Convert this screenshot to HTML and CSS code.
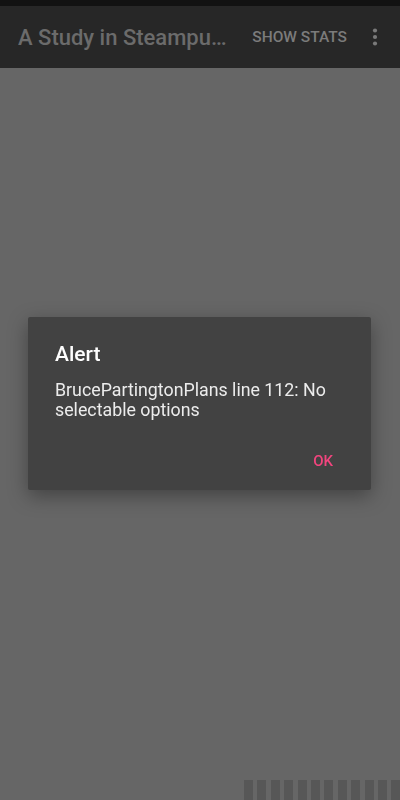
FILE: index.html
```html
<!DOCTYPE html>
<html>

<head>
    <meta charset="utf-8" />
    <title>A Study in Steampunk</title>
    <link rel="stylesheet" href="styles.css">
</head>

<body>
    <div id="screen">
        <div class="status-bar"></div>
        <div class="toolbar">
            <h1 class="toolbar-title">A Study in Steampu…</h1>
            <button class="toolbar-action">SHOW STATS</button>
            <button class="toolbar-menu" aria-label="More options">
                <svg width="6" height="20" viewBox="0 0 6 20">
                    <circle cx="3" cy="3.5" r="2.1" />
                    <circle cx="3" cy="10" r="2.1" />
                    <circle cx="3" cy="16.5" r="2.1" />
                </svg>
            </button>
        </div>
        <div class="content">
            <div class="ticks">
                <span></span><span></span><span></span><span></span>
                <span></span><span></span><span></span><span></span>
                <span></span><span></span><span></span><span></span>
            </div>
        </div>
    </div>

    <div class="dialog-layer">
        <div class="dialog">
            <h2 class="dialog-title">Alert</h2>
            <p class="dialog-message">BrucePartingtonPlans line 112: No selectable options</p>
            <div class="dialog-buttons">
                <button class="dialog-button">OK</button>
            </div>
        </div>
    </div>
</body>

</html>
```

FILE: styles.css
```css
html {
    margin: 0px;
    padding: 0px;
    width: 100%;
    height: 100%;
}

body {
    font-family: 'Roboto', 'Liberation Sans', sans-serif;
    margin: 0px;
    padding: 0px;
    width: 100%;
    height: 100%;
    background-color: #666666;
    overflow: hidden;
}

button {
    font-family: inherit;
    border: none;
    background: none;
    padding: 0px;
    margin: 0px;
    cursor: pointer;
}

#screen {
    width: 100%;
    height: 100%;
    display: flex;
    flex-direction: column;
}

.status-bar {
    height: 6px;
    background-color: #121212;
}

.toolbar {
    height: 62px;
    display: flex;
    align-items: center;
    background-color: #272727;
    padding-left: 18px;
    padding-right: 16px;
}

.toolbar-title {
    flex: 1;
    margin: 0px;
    font-size: 22px;
    font-weight: 500;
    color: #6b6b6b;
    white-space: nowrap;
    overflow: hidden;
}

.toolbar-action {
    font-size: 15.5px;
    font-weight: 500;
    color: #7b7b7b;
    margin-right: 25px;
}

.toolbar-menu {
    width: 6px;
    height: 20px;
    margin-right: 6px;
    fill: #7a7a7a;
}

.toolbar-menu svg {
    display: block;
}

.content {
    flex: 1;
    display: flex;
    flex-direction: column;
    justify-content: flex-end;
}

/* progress ticks along the bottom edge */
.ticks {
    display: flex;
    gap: 4.4px;
    height: 20px;
    margin-left: 244px;
    overflow: hidden;
}

.ticks span {
    flex: none;
    width: 9px;
    background-color: #575757;
}

.dialog-layer {
    position: fixed;
    top: 0px;
    left: 0px;
    right: 0px;
    bottom: 0px;
    display: flex;
    align-items: center;
    justify-content: center;
    padding-top: 7px;
}

.dialog {
    width: 343px;
    box-sizing: border-box;
    margin-left: -1px;
    padding: 23px 0px 11px 27px;
    background-color: #424242;
    border-radius: 2px;
    box-shadow: 0px 6px 20px rgba(0, 0, 0, 0.35);
}

.dialog-title {
    margin: 0px;
    font-size: 21px;
    line-height: 28px;
    font-weight: 500;
    color: #ffffff;
}

.dialog-message {
    margin: 12px 24px 0px 0px;
    font-size: 17.8px;
    line-height: 20px;
    color: #ececec;
}

.dialog-buttons {
    display: flex;
    justify-content: flex-end;
    margin-top: 23px;
    padding-right: 30px;
}

.dialog-button {
    height: 36px;
    padding: 0px 8px;
    font-size: 15px;
    font-weight: 500;
    color: #f2457e;
}
```
